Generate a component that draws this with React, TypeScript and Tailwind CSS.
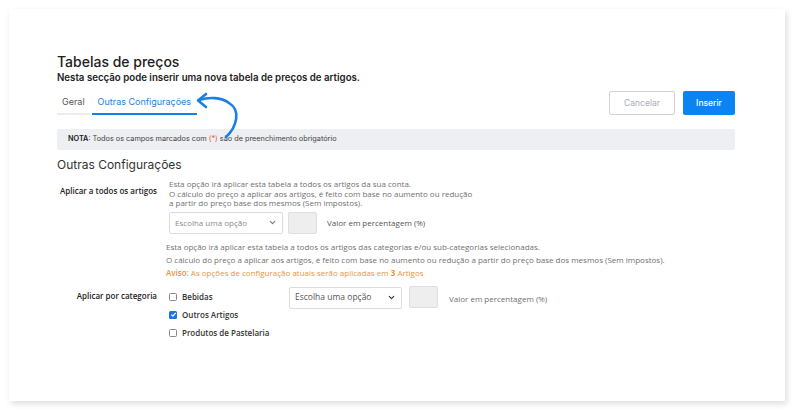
import React from 'react';
import { ChevronDown } from 'lucide-react';

const poppins = { fontFamily: 'Inter, "Noto Sans", sans-serif' };
const openSans = { fontFamily: '"Open Sans", "Noto Sans", sans-serif' };

const Select: React.FC<{ width: string; dark?: boolean }> = ({ width, dark }) => (
    <div
        className={`${width} h-[22px] flex items-center justify-between pl-[5px] pr-[5px] bg-white border border-[#dcdcdc] rounded-[2px] ${
            dark ? 'text-[#555] text-[8.5px]' : 'text-[#8a8a8a] text-[8px]'
        }`}
    >
        <span>Escolha uma opção</span>
        <ChevronDown size={9} strokeWidth={3} className={dark ? 'text-[#333]' : 'text-[#777]'} />
    </div>
);

const Checkbox: React.FC<{ label: string; checked?: boolean }> = ({ label, checked }) => (
    <div className="flex items-center h-[18px] gap-[5px]">
        {checked ? (
            <span className="w-[8px] h-[8px] rounded-[1.5px] bg-[#1a73e8] flex items-center justify-center">
                <svg width="7" height="7" viewBox="0 0 10 10">
                    <path d="M2 5.2 L4.2 7.4 L8.2 2.6" fill="none" stroke="white" strokeWidth="1.8" />
                </svg>
            </span>
        ) : (
            <span className="w-[8px] h-[8px] rounded-[1.5px] border border-[#888] bg-white" />
        )}
        <span className="text-[8px] font-semibold text-[#333]">{label}</span>
    </div>
);

export default function App() {
    return (
        <div className="relative w-[800px] h-[416px] bg-white overflow-hidden" style={openSans}>
            <div className="ml-[9px] mt-[9px] w-[776px] h-[392px] bg-white shadow-[2px_3px_6px_rgba(0,0,0,0.13)] pt-[44px] pl-[48px] pr-[50px]">
                {/* header */}
                <div className="flex items-end justify-between">
                    <div style={poppins}>
                        <h1 className="text-[14px] leading-[18px] font-medium text-[#1d1d1d]">Tabelas de preços</h1>
                        <p className="text-[9.7px] leading-[14px] font-semibold text-[#222]">
                            Nesta secção pode inserir uma nova tabela de preços de artigos.
                        </p>
                        <div className="flex mt-[10px] text-[9px] leading-[14px]">
                            <div className="px-[5px] pb-[4px] border-b-2 border-[#ececec] text-[#555]">Geral</div>
                            <div className="ml-[2px] px-[6px] pb-[4px] border-b-2 border-[#1a7fe6] text-[#1a7fe6]">
                                Outras Configurações
                            </div>
                        </div>
                    </div>
                    <div className="flex gap-[8px]" style={poppins}>
                        <button className="w-[66px] h-[24px] border border-[#cfd3da] rounded-[2px] text-[8.5px] text-[#a7adb7] bg-white">
                            Cancelar
                        </button>
                        <button className="w-[52px] h-[24px] rounded-[2px] text-[8.5px] font-medium text-white bg-[#0b84f3]">
                            Inserir
                        </button>
                    </div>
                </div>

                {/* note */}
                <div className="mt-[14px] h-[21px] bg-[#eeeff3] rounded-[2px] flex items-center pl-[11px] text-[7.3px] text-[#444]" style={poppins}>
                    <span className="font-semibold text-[#222]">NOTA</span>: Todos os campos marcados com&nbsp;
                    <span className="text-[#e5533d]">(*)</span>&nbsp;são de preenchimento obrigatório
                </div>

                <h2 className="mt-[7px] text-[12px] leading-[16px] text-[#333]" style={poppins}>
                    Outras Configurações
                </h2>

                {/* row 1 */}
                <div className="flex mt-[6px]">
                    <div className="w-[100px] text-right whitespace-nowrap text-[8px] font-semibold text-[#222] mt-[6px] leading-[12px]">
                        Aplicar a todos os artigos
                    </div>
                    <div className="ml-[12px]">
                        <p className="text-[8px] leading-[9.5px] text-[#707070] w-[320px]">
                            Esta opção irá aplicar esta tabela a todos os artigos da sua conta.
                            <br />O cálculo do preço a aplicar aos artigos, é feito com base no aumento ou redução
                            <br />a partir do preço base dos mesmos (Sem impostos).
                        </p>
                        <div className="flex items-center mt-[4px]">
                            <Select width="w-[114px]" />
                            <div className="ml-[5px] w-[29px] h-[22px] bg-[#eeeeee] border border-[#dedede] rounded-[2px]" />
                            <span className="ml-[10px] text-[8px] text-[#555]">Valor em percentagem (%)</span>
                        </div>
                    </div>
                </div>

                {/* row 2 description */}
                <div className="ml-[109px] mt-[6px] text-[8px] leading-[13px] text-[#707070]">
                    <p>Esta opção irá aplicar esta tabela a todos os artigos das categorias e/ou sub-categorias selecionadas.</p>
                    <p>
                        O cálculo do preço a aplicar aos artigos, é feito com base no aumento ou redução a partir do preço base dos mesmos (Sem impostos).
                    </p>
                    <p className="text-[#f0913a]">
                        <span className="font-semibold">Aviso:</span> As opções de configuração atuais serão aplicadas em{' '}
                        <span className="font-bold">3</span> Artigos
                    </p>
                </div>

                {/* row 2 */}
                <div className="flex mt-[8px]">
                    <div className="w-[100px] text-right whitespace-nowrap text-[8px] font-semibold text-[#222] mt-[3px] leading-[12px]">
                        Aplicar por categoria
                    </div>
                    <div className="ml-[12px] w-[120px] pt-[1px]">
                        <Checkbox label="Bebidas" />
                        <Checkbox label="Outros Artigos" checked />
                        <Checkbox label="Produtos de Pastelaria" />
                    </div>
                    <div className="flex items-start">
                        <Select width="w-[113px]" dark />
                        <div className="ml-[7px] mt-[-1px] w-[29px] h-[22px] bg-[#eeeeee] border border-[#dedede] rounded-[2px]" />
                        <span className="ml-[11px] mt-[6px] text-[8px] text-[#707070]">Valor em percentagem (%)</span>
                    </div>
                </div>
            </div>

            {/* hand-drawn arrow overlay */}
            <svg className="absolute inset-0 pointer-events-none" width="800" height="416" viewBox="0 0 800 416">
                <path
                    d="M226 137 C237 127, 241 110, 229 103 C221 97, 209 97, 199 100"
                    fill="none"
                    stroke="#1a7fe6"
                    strokeWidth="2.6"
                    strokeLinecap="round"
                />
                <path
                    d="M206 94 L198 100.5 L206 107"
                    fill="none"
                    stroke="#1a7fe6"
                    strokeWidth="2.6"
                    strokeLinecap="round"
                    strokeLinejoin="round"
                />
            </svg>
        </div>
    );
}
